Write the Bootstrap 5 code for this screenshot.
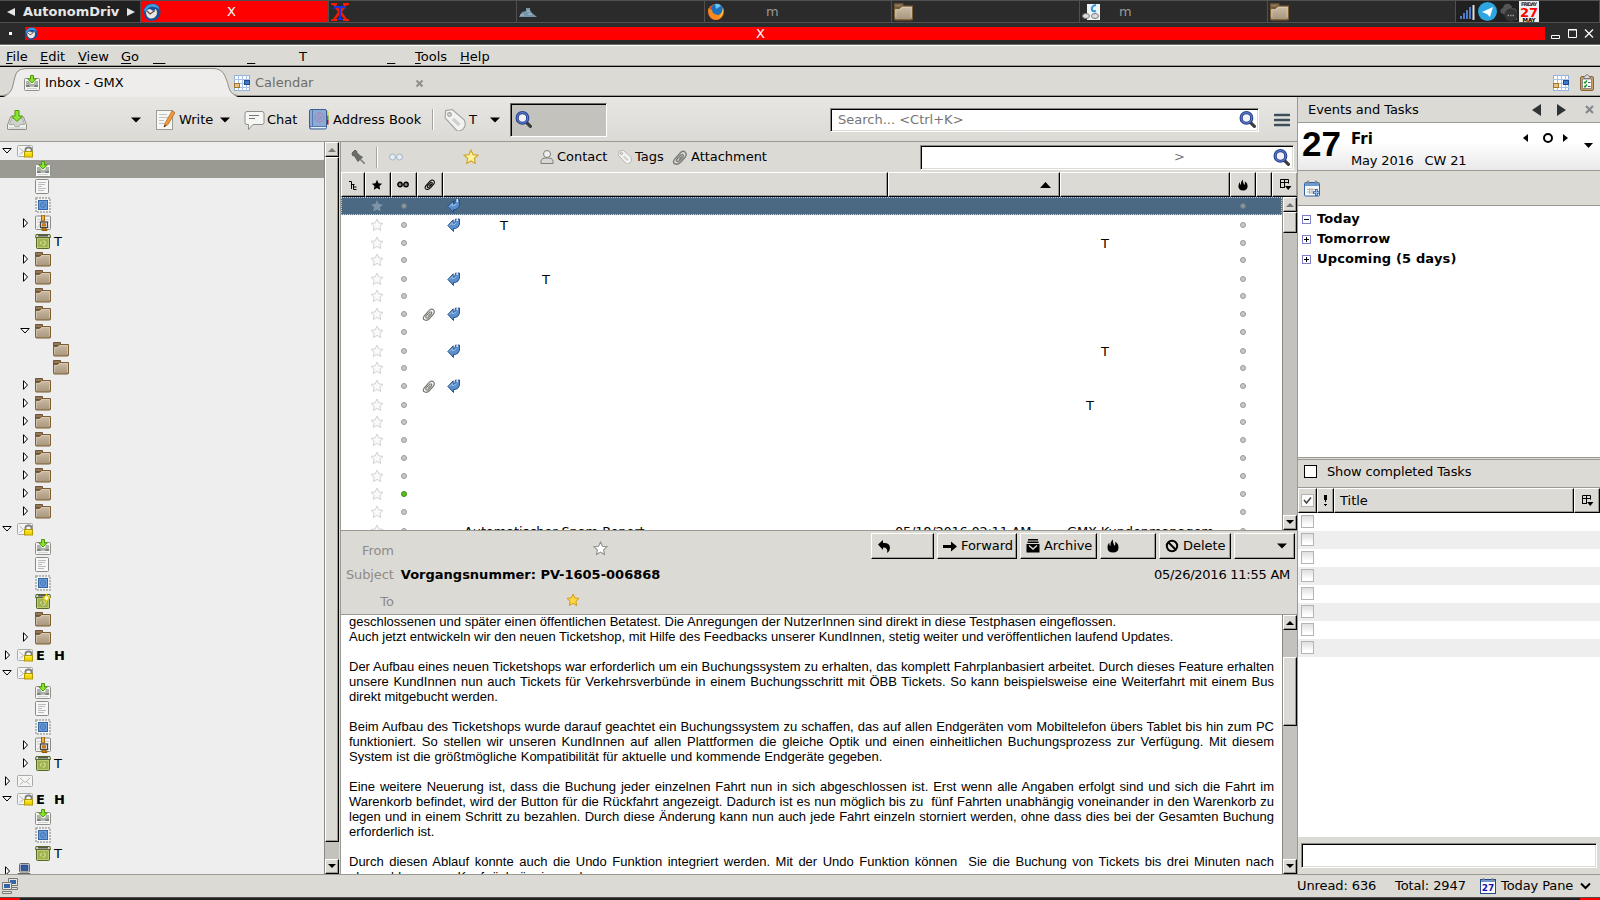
<!DOCTYPE html>
<html lang="en">

<head>
    <meta charset="UTF-8">
    <title>Inbox - GMX</title>
    <meta name="viewport" content="width=device-width, initial-scale=1">
    <link href="https://cdn.jsdelivr.net/npm/bootstrap@5.3.0/dist/css/bootstrap.min.css" rel="stylesheet">
    <style>
        body {
            width: 1600px;
            height: 900px;
            overflow: hidden;
            background-color: #dcdad5;
            font: 13px/18px "DejaVu Sans", sans-serif;
            color: #000;
            white-space: nowrap;
        }

        svg {
            display: block;
            flex: none;
        }

        .bar-grid {
            display: grid;
            align-items: center;
            justify-items: start;
        }

        /* desktop panel */
        .panel {
            height: 23px;
            background-color: #2b2b2b;
            border-top: 1px solid #505050;
            border-bottom: 1px solid #505050;
            color: #999;
            display: grid;
            grid-template-columns: 141px 188px 188px 188px 187px 188px 188px 188px 144px;
        }

        .panel > div {
            border-right: 1px solid #505050;
            display: flex;
            align-items: center;
            padding-left: 2px;
            overflow: hidden;
        }

        .panel .pager {
            background-color: #202020;
            color: #e6e6e6;
            font-weight: bold;
            padding-left: 7px;
            gap: 8px;
        }

        .panel .active-task {
            background-color: red;
            color: #fff;
        }

        .task-label {
            margin-left: 66px;
        }

        .task-label-m {
            margin-left: 41px;
        }

        .task-label-near {
            margin-left: 19px;
        }

        .titlebar {
            height: 22px;
            background-color: #2b2b2b;
            border-bottom: 1px solid #6c6c6a;
            padding-top: 4px;
        }

        .title-dot {
            width: 3px;
            height: 3px;
            margin: 5px 13px 0 9px;
            background-color: #fff;
        }

        .title-fill {
            width: 1520px;
            height: 13px;
            line-height: 13px;
            background-color: red;
            color: #fff;
        }

        .title-text {
            margin-left: 718px;
        }

        .menubar {
            height: 22px;
            border-top: 1px solid #fff;
            border-bottom: 1px solid #000;
            box-shadow: inset 0 -1px #9a9992;
            padding: 2px 0 0 6px;
            grid-template-columns: 34px 38px 43px 32px 94px 52px 88px 28px 45px auto;
        }

        .menubar u {
            text-underline-offset: 2px;
            text-decoration-thickness: 1px;
        }

        .tabbar {
            height: 30px;
        }

        .tab-shape {
            grid-area: 1 / 1;
            width: 1600px;
            height: 30px;
        }

        .tab-items {
            grid-area: 1 / 1;
            height: 30px;
            padding: 1px 0 0 24px;
            grid-template-columns: 21px 189px 21px 160px 1138px 26px auto;
        }

        .tab-items span {
            padding-top: 1px;
        }

        .tab-dim {
            color: #6d6c68;
        }

        /* mail toolbar */
        .mailbar {
            height: 45px;
            padding: 1px 0 0 7px;
            border-bottom: 1px solid #9a9992;
            background: linear-gradient(#e7e6e3, #dcdad5);
            grid-template-columns: 124px 24px 24px 41px 24px 23px 41px 25px 99px 12px 25px 21px 20px 320px 444px auto;
        }

        .sep-line {
            width: 2px;
            height: 21px;
            border-left: 1px solid #a5a39d;
            border-right: 1px solid #fff;
        }

        .filter-btn {
            width: 97px;
            height: 34px;
            padding-left: 4px;
            border: 1px solid;
            border-color: #6b6a66 #fff #fff #6b6a66;
            box-shadow: inset 1px 1px #000;
            background-color: #c4c2bd;
        }

        .sunken {
            border: 1px solid;
            border-color: #8c8a84 #fff #fff #8c8a84;
            box-shadow: inset 1px 1px #000, inset -1px -1px #dcdad5;
            background-color: #fff;
            color: #757575;
        }

        .search-box {
            width: 429px;
            height: 24px;
            padding: 0 2px 0 7px;
        }

        /* folder tree */
        .mail-side {
            width: 1297px;
        }

        .lower-area {
            height: 732px;
        }

        .tree {
            width: 324px;
            overflow: hidden;
            background-color: #eee;
        }

        .tree-row {
            height: 18px;
            display: flex;
            align-items: center;
        }

        .tree-row.chosen {
            background-color: #9a9992;
        }

        .tree-row .lbl {
            margin-left: 3px;
            padding-top: 2px;
        }

        .scroller {
            width: 15px;
            flex: none;
            background-color: #c4c2bd;
            border-left: 1px solid #8c8a84;
            display: flex;
            flex-direction: column;
        }

        .raised {
            border: 1px solid;
            border-color: #fff #000 #000 #fff;
            box-shadow: inset -1px -1px #9a9992;
            background-color: #dcdad5;
        }

        .scroller .sbtn {
            height: 15px;
            display: flex;
            align-items: center;
            justify-content: center;
        }

        .thumb-tree {
            height: 685px;
        }

        .thumb-list {
            height: 21px;
        }

        .thumb-msg {
            height: 69px;
            margin-top: 27px;
        }

        .mail-area {
            width: 957px;
            margin-left: 1px;
            border-left: 1px solid #9a9992;
        }

        .quickbar {
            height: 30px;
            padding-left: 10px;
            grid-template-columns: 25px 12px 75px 77px 17px 61px 17px 37px 19px 229px auto;
        }

        .quickbar span {
            letter-spacing: -.03px;
        }

        .quick-box {
            width: 374px;
            height: 25px;
            padding: 0 3px 0 253px;
        }

        .list-grid {
            display: grid;
            grid-template-columns: 24px 26px 26px 26px 445px 172px 170px 26px 16px 25px;
        }

        .head-cell {
            height: 25px;
            border-top: 1px solid #fff;
            border-left: 1px solid #fff;
            border-right: 1px solid #000;
            border-bottom: 1px solid #000;
            box-shadow: inset -1px -1px #9a9992;
            display: flex;
            align-items: center;
            justify-content: center;
        }

        .head-cell.narrow {
            padding-right: 2px;
        }

        .head-cell.sorted {
            justify-content: flex-end;
            padding-right: 8px;
        }

        .list-area {
            height: 333px;
            overflow: hidden;
            background-color: #fff;
        }

        .mail-list {
            width: 941px;
            overflow: hidden;
        }

        .mail-row {
            height: 18px;
            align-items: center;
            justify-items: center;
        }

        .mail-row > .wide {
            width: 100%;
            display: flex;
            align-items: center;
        }

        .mail-row > .wide span {
            padding-top: 2px;
            letter-spacing: -.12px;
        }

        .mail-row > .wide .date {
            padding-left: 7px;
            letter-spacing: -.24px;
        }

        .mail-row.chosen {
            background-color: #4b6983;
            outline: 1px dotted #f0d070;
            outline-offset: -1px;
        }

        .flag-slot {
            padding-right: 2px;
        }

        .clip-slot {
            padding-right: 3px;
        }

        .dot {
            width: 6px;
            height: 6px;
            border-radius: 50%;
            border: 1px solid #9a9a9a;
            background-color: #c8c8c8;
        }

        .dot.unread {
            background-color: #5bc01d;
            border-color: #3c8a10;
        }

        .mail-row.chosen .dot {
            background-color: #8c959c;
            border-color: #6b7984;
        }

        .reply-slot {
            width: 21px;
            padding-left: 4px;
        }

        /* message header */
        .msg-head {
            height: 85px;
            border-top: 1px solid #9a9992;
            border-bottom: 1px solid #9a9992;
            padding: 2px 2px 0 0;
        }

        .head-labels {
            width: 53px;
            text-align: right;
            color: #8c8b87;
            padding-top: 9px;
            letter-spacing: -.1px;
        }

        .head-labels div {
            height: 24px;
        }

        .head-labels div:last-child {
            padding-top: 3px;
        }

        .head-values {
            width: 472px;
            margin-left: 7px;
            padding-top: 8px;
        }

        .head-values div {
            height: 25px;
            display: flex;
        }

        .star-from {
            margin: 0 0 0 192px;
        }

        .star-to {
            margin: 2px 0 0 165px;
        }

        .msg-buttons {
            height: 26px;
            display: grid;
            grid-template-columns: 63px 80px 77px 56px 72px 61px;
            column-gap: 3px;
        }

        .msg-buttons > div {
            display: flex;
            align-items: center;
            padding-left: 5px;
            gap: 4px;
            letter-spacing: -.05px;
        }

        .msg-buttons .more-btn {
            justify-content: flex-end;
            padding-right: 7px;
        }

        .msg-date {
            padding: 7px 5px 0 0;
            letter-spacing: -.25px;
        }

        /* message text */
        .msg-body {
            height: 259px;
            background-color: #fff;
        }

        .msg-text {
            width: 941px;
            overflow: hidden;
            padding-left: 8px;
            font: 13px/15px "Liberation Sans", Arial, sans-serif;
        }

        .msg-text p {
            width: 925px;
            margin: 0 0 15px;
            position: relative;
            top: -1px;
        }

        .msg-text span {
            display: block;
            text-align: left;
        }

        .msg-text .full {
            text-align: justify;
            text-align-last: justify;
        }

        .msg-text .loose {
            word-spacing: .3px;
        }

        /* today pane */
        .today-pane {
            width: 303px;
            border-left: 1px solid #9a9992;
        }

        .today-top {
            height: 26px;
            padding-left: 10px;
            border-bottom: 1px solid #9a9992;
            grid-template-columns: 224px 25px 28px auto;
        }

        .today-top span {
            letter-spacing: -.05px;
        }

        .day-box {
            height: 48px;
            border-bottom: 1px solid #9a9992;
            background: linear-gradient(#fff 40%, #e9e9e9);
            display: flex;
        }

        .day-num {
            width: 48px;
            padding: 0 0 0 4px;
            font: bold 35px/41px "Liberation Sans", Arial, sans-serif;
        }

        .day-text {
            width: 172px;
            margin-left: 5px;
            padding-top: 6px;
        }

        .day-name {
            font-size: 15px;
            font-weight: bold;
            line-height: 20px;
        }

        .day-month {
            line-height: 23px;
            letter-spacing: -.18px;
        }

        .cw {
            margin-left: 7px;
        }

        .day-nav {
            padding-top: 5px;
            grid-template-columns: 20px 20px 21px auto;
            height: 20px;
        }

        .day-more {
            margin-top: 15px;
        }

        .event-tools {
            height: 35px;
            border-bottom: 1px solid #9a9992;
            padding-left: 6px;
        }

        .agenda {
            height: 251px;
            background-color: #fff;
            font-weight: bold;
            padding-top: 3px;
        }

        .agenda-row {
            height: 20px;
            padding-left: 4px;
            display: flex;
            align-items: center;
            gap: 6px;
            letter-spacing: .15px;
        }

        .show-done {
            height: 31px;
            border-top: 1px solid #9a9992;
            border-bottom: 1px solid #9a9992;
            box-shadow: inset 0 1px #dcdad5, inset 0 2px #9a9992;
            padding: 0 0 2px 6px;
            letter-spacing: -.14px;
        }

        .done-box {
            width: 13px;
            height: 13px;
            margin-right: 10px;
            border: 1px solid #000;
            background-color: #fff;
        }

        .task-head {
            display: grid;
            grid-template-columns: 19px 17px 240px 26px;
        }

        .task-head .title-cell {
            justify-content: flex-start;
            padding-left: 5px;
        }

        .task-list {
            height: 324px;
            background-color: #fff;
        }

        .task-row {
            height: 18px;
            padding: 2px 0 0 3px;
        }

        .task-row:nth-child(even) {
            background-color: #eee;
        }

        .task-check {
            width: 13px;
            height: 13px;
            border: 1px solid #b4b4b4;
            background: linear-gradient(#dedede, #fff 80%);
        }

        .task-entry {
            padding: 6px 3px 6px 3px;
        }

        .task-entry div {
            height: 25px;
            width: 296px;
        }

        /* status bar */
        .statusbar {
            height: 23px;
            border-top: 1px solid #9a9992;
            padding-left: 2px;
            grid-template-columns: 1295px 98px 85px 21px 79px auto;
            letter-spacing: -.1px;
        }

        .bottom-edge {
            height: 3px;
            background-color: #202020;
            border-top: 1px solid #505050;
        }

        .bottom-edge div {
            width: 20px;
            height: 2px;
            background-color: red;
        }
    </style>
</head>

<body>
    <svg width="0" height="0" class="position-absolute">
        <defs>
            <linearGradient id="g-folder" x2="0" y2="1">
                <stop stop-color="#cbbca6" />
                <stop offset="1" stop-color="#a7957b" />
            </linearGradient>
            <symbol id="i-folder" viewBox="0 0 16 16">
                <path d="M.5 13V1.5h7v3h-7z" fill="#8f7a5f" stroke="#6f5535" />
                <path d="M.5 13.5V5.5h4l2-2h9v10.500q0 1-1 1h-13q-1 0-1-1z" fill="url(#g-folder)" stroke="#7d5c30" />
                <path d="M1.500 13V6.500h3.500l2-2h7.500V13" fill="none" stroke="#dccfb9" opacity=".7" />
            </symbol>
            <symbol id="i-inbox" viewBox="0 0 16 16">
                <path d="M.5 4.500q0-1 1-1h13q1 0 1 1v10q0 1-1 1h-13q-1 0-1-1z" fill="#f6f6f4" stroke="#8d8f8a" />
                <path d="M2 6h3l2 3h3l1-3h3v5H2z" fill="#aeb3a9" />
                <path d="M2 10h3l1 1.500h4l1-1.500h3v2H2z" fill="#7f847b" />
                <path d="M3 13.500h10" stroke="#d2d4cf" />
                <path d="M6.500.5h3v3.500h2.800L8 8 3.700 4h2.800z" fill="#8ae234" stroke="#4e9a06" />
            </symbol>
            <symbol id="i-get" viewBox="0 0 20 20">
                <path d="M3.500 7h13l3 8v4q0 .5-.5.5H1q-.5 0-.5-.5v-4z" fill="#f0f0ee" stroke="#8d8f8a" />
                <path d="M4.500 8.500h11l2 6H13l-1 2H8l-1-2H2.500z" fill="#d0d3cc" stroke="#a9aca5" />
                <path d="M2 18h16" stroke="#c6c8c3" />
                <path d="M8 .5h4V6h3.500L10 11.500 4.500 6H8z" fill="#8ae234" stroke="#4e9a06" />
            </symbol>
            <symbol id="i-draft" viewBox="0 0 16 16">
                <rect x=".5" y=".5" width="13" height="14" rx="1" fill="#f7f7f7" stroke="#888a85" />
                <path d="M3 3.500h8M3 5.500h7M3 7.500h4M3 9.500h8M3 11.500h6" stroke="#bcbdba" />
            </symbol>
            <symbol id="i-sent" viewBox="0 0 16 16">
                <rect x="1" y="1" width="14" height="14" fill="#f4f4f2" stroke="#a3a5a0" stroke-width="1.500" stroke-dasharray="2 1" />
                <rect x="3.500" y="3.500" width="9" height="9" fill="#6a9bd8" stroke="#3465a4" />
                <circle cx="8" cy="8" r="2.500" fill="none" stroke="#3f74b8" />
                <circle cx="8" cy="8" r=".8" fill="#3f74b8" />
            </symbol>
            <symbol id="i-archive" viewBox="0 0 16 16">
                <rect x=".5" y="1" width="15" height="13.500" rx="1" fill="#f3f3f1" stroke="#888a85" />
                <path d="M2 4.500h12M2 7h12" stroke="#ccc" />
                <path d="M2 13l4-5M14 13l-2-3" stroke="#c3c3c0" />
                <path d="M6.500 0h3v6h-3z" fill="#e9b050" stroke="#a4660c" />
                <path d="M7 12v3.500h5V14h-1.500v-2" fill="#c17d11" stroke="#8f5902" />
                <rect x="5.500" y="7" width="7" height="5.500" fill="#e6e6e3" stroke="#444" stroke-width="1.200" />
                <rect x="7.500" y="8.700" width="3" height="2.300" fill="#f57900" stroke="#8f5902" stroke-width=".6" />
            </symbol>
            <symbol id="i-trash" viewBox="0 0 16 16">
                <path d="M1.500 4.500h13v10q0 1-1 1h-11q-1 0-1-1z" fill="#a0b14e" stroke="#55692a" />
                <path d="M2.500 5.500h11v9h-11z" fill="none" stroke="#bccb78" />
                <path d="M1 1.500h14l.5 3H.5z" fill="#d5d8cf" stroke="#55692a" />
                <path d="M3 2h10v1.500H3z" fill="#555753" />
                <circle cx="8" cy="10" r="2.300" fill="none" stroke="#dfe8b5" stroke-dasharray="3.500 1.500" />
            </symbol>
            <symbol id="i-spark" viewBox="0 0 16 16">
                <use href="#i-trash" />
                <path d="M11.500 0l1.200 3.200L16 5l-3.300 1.500L11.500 10l-1.200-3.500L7 5l3.300-1.800z" fill="#edd400" />
                <circle cx="11.500" cy="5" r="2.300" fill="#fffbe0" stroke="#e8c500" stroke-width=".8" />
            </symbol>
            <symbol id="i-mail" viewBox="0 0 16 16">
                <rect x=".5" y="2.500" width="15" height="11" rx="1" fill="#f5f5f4" stroke="#a9aaa6" />
                <path d="M3 5l5 4.500L13 5M3 11.500L6.500 8.500M13 11.500L9.500 8.500" fill="none" stroke="#b6b7b3" />
            </symbol>
            <symbol id="i-account" viewBox="0 0 16 16">
                <rect x=".5" y="2.500" width="15" height="11" rx="1" fill="#f5f5f4" stroke="#a9aaa6" />
                <path d="M2.500 5l4 3.500-4 3" fill="none" stroke="#b6b7b3" />
                <path d="M8.500 9V6.500q0-2 3-2t3 2V9" fill="none" stroke="#7d7f7a" stroke-width="1.800" />
                <rect x="7.500" y="8.500" width="8" height="5.500" fill="#f3d500" stroke="#b39700" />
                <path d="M8.500 9.800h6" stroke="#fff170" />
            </symbol>
            <symbol id="i-pc" viewBox="0 0 16 16">
                <rect x="2.500" y=".5" width="10" height="8.500" rx="1" fill="#e8e8e6" stroke="#666864" />
                <rect x="4" y="2" width="7" height="5.500" fill="#3458a0" stroke="#1f3a78" stroke-width=".7" />
                <path d="M1 10.500h12v3H1z" fill="#d3d3d0" stroke="#666864" />
            </symbol>
            <symbol id="i-open" viewBox="0 0 10 10">
                <path d="M.8 2.500h8.400L5 7z" fill="#fff" stroke="#000" />
            </symbol>
            <symbol id="i-shut" viewBox="0 0 10 10">
                <path d="M3.500.7v8.600L7.500 5z" fill="#fff" stroke="#000" />
            </symbol>
            <symbol id="i-cal" viewBox="0 0 16 16">
                <rect x=".5" y=".5" width="15" height="15" fill="#fff" stroke="#8fb0dc" />
                <path d="M0 4.500h16M0 8.500h16M0 12.500h16M4.500 0v16M8.500 0v16M12.500 0v16" stroke="#a9c3e6" />
                <rect x="10.500" y="5.500" width="5" height="4" fill="#3d78c9" stroke="#204a87" />
                <rect x=".5" y="8.500" width="5" height="4" fill="#e9c27e" stroke="#a4762c" />
            </symbol>
            <symbol id="i-clipboard" viewBox="0 0 16 17">
                <rect x="1.500" y="2.500" width="13" height="14" rx="1.500" fill="#c8a06c" stroke="#8a6534" />
                <path d="M3.500 5h9v9.500h-9z" fill="#fff" stroke="#777" stroke-width=".8" />
                <path d="M5 4.500V3l3-2.500L11 3v1.500z" fill="#ddd" stroke="#777" />
                <path d="M5 8l1 1 2-2.500M5 12l1 1 2-2.500" fill="none" stroke="#0a9a20" stroke-width="1.400" />
                <path d="M9 8.500h2.500M9 12.500h2.500" stroke="#555" />
            </symbol>
            <symbol id="i-lens" viewBox="0 0 16 16">
                <path d="M10.500 10.500l4 4" stroke="#3b3b3b" stroke-width="3" stroke-linecap="round" />
                <circle cx="7" cy="6.500" r="5" fill="#f2f2f5" stroke="#26408f" stroke-width="3" />
                <circle cx="7" cy="6.500" r="5" fill="none" stroke="#5f7fd0" stroke-width="1" />
            </symbol>
            <symbol id="i-tri" viewBox="0 0 10 6">
                <path d="M0 .5h10L5 5.500z" />
            </symbol>
            <symbol id="i-star" viewBox="0 0 14 14">
                <path d="M7 1l1.800 3.900 4.200.5-3.100 2.900.8 4.200L7 10.400l-3.700 2.100.8-4.200L1 5.400l4.200-.5z" />
            </symbol>
            <symbol id="i-reply" viewBox="0 0 13 14">
                <path d="M.8 7.500L6.200 1.800V5q2.300 0 2.300-4h4v5q-.5 3.500-4 4.500H6.500v3z" fill="#5b8fcb" stroke="#204a87" stroke-width=".9" />
                <path d="M10.200 0v3" stroke="#fff" stroke-width="1.200" />
                <path d="M2.300 7.500l3-3v2.200q3 0 4.200-2" fill="none" stroke="#a7c8ec" stroke-width=".8" />
            </symbol>
            <symbol id="i-clip" viewBox="0 0 14 14">
                <path d="M2 12.500Q.5 11 2.500 8.500L8 2.300q2.500-2 4.300-.3t.2 4.300L8.500 11q-3.500 3.500-6.500 1.500zM4.500 10.500Q3.500 9.500 5 8l3.500-3.500q1.200-.8 1.800 0t-.3 2L7 10q-1.500 1.300-2.500.5z" fill="none" stroke-width="1.300" />
                <path d="M6.500 9l2.500-3" fill="none" />
            </symbol>
            <symbol id="i-tag" viewBox="0 0 20 20">
                <path d="M1.500 1.500l6-1 11 9.500q2 5-1 8t-6 1.500L1 8z" fill="#f3f3f1" stroke="#a0a29d" />
                <path d="M8 9l6 5.500" stroke="#cfcfcc" stroke-width="3" />
                <circle cx="5" cy="5" r="1.700" fill="#dcdad5" stroke="#a0a29d" />
            </symbol>
            <symbol id="i-flame" viewBox="0 0 12 14">
                <path d="M6 .5q-.5 3 .8 4.800.3 2 1.200 1 .8-1.500 0-3.500 3.500 1.500 3.500 5.700 0 5-5.500 5t-5.500-5Q.5 5.500 2.300 3.500q-.3 3 1.200 3.500Q3 3 6 .5z" />
            </symbol>
            <symbol id="i-pick" viewBox="0 0 13 13">
                <path d="M1.500 10V1.500h8v4M1.500 4.500h8M5.500 1.500v8M1 9.500h5" fill="none" stroke="#000" />
                <path d="M6 8h6.500L9.200 12z" />
            </symbol>
            <symbol id="i-bird" viewBox="0 0 18 18">
                <path d="M1 10Q0 3 6 1q7-2 10 3 3 6 0 10-3 4-8 4-6-1-7-8z" fill="#1c4f96" />
                <path d="M1 7Q4 0 11 1q5 1 5.500 6-2-3-6-3-5-1-8 5z" fill="#3b9be0" />
                <path d="M3 9q2-4 5-2.500L10 8l3-2q2 4 0 7-2 3-6 2.500Q3 14 3 9z" fill="#ece7df" />
                <path d="M4 8l3 3 5-3.500" stroke="#5c4c42" fill="none" stroke-width="1.200" />
            </symbol>
        </defs>
    </svg>

    <div class="panel">
        <div class="pager">
            <svg width="8" height="8"><path d="M8 0v8L0 4z" fill="#e6e6e6" /></svg>
            <span>AutonomDriv</span>
            <svg width="8" height="8"><path d="M0 0v8l8-4z" fill="#e6e6e6" /></svg>
        </div>
        <div class="active-task">
            <svg width="18" height="18"><use href="#i-bird" /></svg>
            <span class="task-label">X</span>
        </div>
        <div>
            <svg width="18" height="18" viewBox="0 0 18 18">
                <path d="M0 0h6v2H5l4 5 4-5h-1V0h6v2h-2l-5 7 5 7h2v2h-6v-2h1l-4-5-4 5h1v2H0v-2h2l5-7-5-7H0z" fill="#f21d00" />
                <path d="M3 3h12v3h-1l-1-1h-3v10l2 1v1H6v-1l2-1V5H5L4 6H3z" fill="#1a35e0" />
            </svg>
        </div>
        <div>
            <svg width="18" height="18" viewBox="0 0 18 18">
                <path d="M0 14l3-5 4-1V5h4v2l2 3 5 4z" fill="#7896aa" />
                <path d="M1 12h4M8 8h3M9 11h4" stroke="#a9c2d2" />
            </svg>
        </div>
        <div>
            <svg width="18" height="18" viewBox="0 0 18 18">
                <circle cx="9" cy="9" r="8" fill="#e8601c" />
                <circle cx="10" cy="7" r="6.200" fill="#1c6fc0" />
                <path d="M8 1q4-1 6 2l-5 3z" fill="#67c3ef" />
                <path d="M1 5q1 2 4 1.500Q5 11 11 12q3-1 5-4 0 8-7 9-8-1-8-12z" fill="#f58a1f" />
                <path d="M16 4q2 7-4 11l3-6z" fill="#ffc83a" />
            </svg>
            <span class="task-label-m">m</span>
        </div>
        <div><svg width="19" height="19"><use href="#i-folder" /></svg></div>
        <div>
            <svg width="18" height="18" viewBox="0 0 18 18">
                <path d="M5 1h13v16H5z" fill="#eef3f6" />
                <path d="M14 2q-5 1-4 5 1 2 4 1" fill="none" stroke="#2f9bd8" stroke-width="2" />
                <ellipse cx="4" cy="13" rx="3.500" ry="2.500" fill="#ddd" stroke="#777" />
                <ellipse cx="13" cy="13" rx="3.500" ry="2.500" fill="#ddd" stroke="#777" />
            </svg>
            <span class="task-label-near">m</span>
        </div>
        <div><svg width="19" height="19"><use href="#i-folder" /></svg></div>
        <div class="bg-black bg-opacity-25">
            <svg width="82" height="21" viewBox="0 0 82 21">
                <path d="M3 18v-3M6 18v-6M9 18V9M12 18V6" stroke="#4d79c7" stroke-width="2" />
                <path d="M15.500 19V4" stroke="#ddd" stroke-width="2" />
                <circle cx="29.500" cy="10.500" r="9.500" fill="#2ca5e0" />
                <path d="M24 11l11-5-3 10-3-3z" fill="#fff" />
                <path d="M43 12q-2-4 2-5 1-5 6-4 3 1 3 4 5 0 5 4v8h-9l-3-5z" fill="#555" />
                <circle cx="53" cy="14" r="6.500" fill="#333" />
                <path d="M49.500 14.500h7" stroke="#999" stroke-width="1.500" stroke-dasharray="1.500 1" />
                <path d="M61 0h20v21H61z" fill="#eee" />
                <text x="71" y="5" font-size="5" font-weight="bold" text-anchor="middle" fill="#333" textLength="16">FRIDAY</text>
                <text x="71" y="15.500" font-size="13" font-weight="bold" text-anchor="middle" fill="#f00">27</text>
                <text x="71" y="20.500" font-size="5.500" font-weight="bold" text-anchor="middle" fill="#000">MAY</text>
            </svg>
        </div>
    </div>

    <div class="titlebar d-flex">
        <div class="title-dot"></div>
        <div class="title-fill d-flex">
            <svg width="13" height="13"><use href="#i-bird" /></svg>
            <span class="title-text">X</span>
        </div>
        <svg width="55" height="14" viewBox="0 0 55 14">
            <path d="M6.500 8.500h8v3h-8zM23.500 2.500h8v8h-8z" fill="none" stroke="#fff" />
            <path d="M23 3h9M40 2.500l8 8M48 2.500l-8 8" fill="none" stroke="#fff" stroke-width="1.200" />
        </svg>
    </div>

    <div class="menubar bar-grid">
        <span><u>F</u>ile</span>
        <span><u>E</u>dit</span>
        <span><u>V</u>iew</span>
        <span><u>G</u>o</span>
        <u>&nbsp; &nbsp;</u>
        <u>&nbsp;&nbsp;</u>
        <span>T</span>
        <u>&nbsp;&nbsp;</u>
        <span><u>T</u>ools</span>
        <span><u>H</u>elp</span>
    </div>

    <div class="tabbar d-grid">
        <svg class="tab-shape" viewBox="0 0 1600 30">
            <path d="M0 28.500H1600" stroke="#9a9992" />
            <path d="M0 29.500H1600" stroke="#000" />
            <path d="M3 30Q11 28 13 20T17 5Q20 1.500 26 1.500H214Q222 2 225 9T229 21Q231 28 238 30z" fill="#eeedeb" />
            <path d="M3 28.500Q11 28 13 18T17 5Q20 1.500 26 1.500H214Q222 2 225 9T229 21Q231 28 238 28.500" fill="none" stroke="#8f8e88" />
        </svg>
        <div class="tab-items bar-grid">
            <svg width="16" height="16"><use href="#i-inbox" /></svg>
            <span>Inbox - GMX</span>
            <svg width="16" height="16"><use href="#i-cal" /></svg>
            <span class="tab-dim">Calendar</span>
            <svg width="10" height="10"><path d="M1.500 2.500l6 6M7.500 2.500l-6 6" stroke="#8f8e89" stroke-width="2" /></svg>
            <svg width="16" height="16"><use href="#i-cal" /></svg>
            <svg width="16" height="17"><use href="#i-clipboard" /></svg>
        </div>
    </div>

    <div class="d-flex">
        <div class="mail-side">
            <div class="mailbar bar-grid">
                <svg width="20" height="20"><use href="#i-get" /></svg>
                <svg width="10" height="6"><use href="#i-tri" /></svg>
                <svg width="20" height="20" viewBox="0 0 20 20">
                    <rect x="1.500" y=".5" width="16" height="19" fill="#f7f7f6" stroke="#9b9d98" />
                    <path d="M4 4.500h8M4 7.500h9M4 10.500h5M4 13.500h6" stroke="#c3c4c1" />
                    <path d="M9 17l1.500-4.500L17 1l3 1.500L13 14.500z" fill="#f09a3a" stroke="#b0651a" stroke-width=".8" />
                    <path d="M9 17l.7-2 1.300.8z" />
                </svg>
                <span>Write</span>
                <svg width="10" height="6"><use href="#i-tri" /></svg>
                <svg width="21" height="20" viewBox="0 0 21 20">
                    <path d="M3 1.500h15q2 0 2 2v9q0 2-2 2H9l-4.500 5v-5H3q-2 0-2-2v-9q0-2 2-2z" fill="#f6f6f5" stroke="#8d8f8a" />
                    <path d="M5 5.500h10M5 8.500h6" stroke="#777" />
                </svg>
                <span>Chat</span>
                <svg width="21" height="21" viewBox="0 0 21 21">
                    <path d="M18 2h2.500v4.500H18z" fill="#edd400" />
                    <path d="M18 6.500h2.500V11H18z" fill="#4e9a06" />
                    <path d="M18 11h2.500v4.500H18z" fill="#c00" />
                    <rect x="1.500" y=".5" width="17" height="19.500" rx="1.500" fill="#8aabd6" stroke="#3c5e94" />
                    <path d="M4.500 1v16M2 17.500h16" stroke="#5478ae" />
                    <path d="M3 18.700h15" stroke="#fff" />
                    <circle cx="11.500" cy="8.500" r="4.500" fill="none" stroke="#b77aa8" />
                    <circle cx="11.500" cy="8.500" r="1.700" fill="none" stroke="#b77aa8" />
                </svg>
                <span>Address Book</span>
                <div class="sep-line"></div>
                <svg width="22" height="22"><use href="#i-tag" /></svg>
                <span>T</span>
                <svg width="10" height="6"><use href="#i-tri" /></svg>
                <div class="filter-btn d-flex align-items-center">
                    <svg width="17" height="17"><use href="#i-lens" /></svg>
                </div>
                <div class="sunken search-box d-flex align-items-center justify-content-between">
                    <span>Search... &lt;Ctrl+K&gt;</span>
                    <svg width="17" height="17"><use href="#i-lens" /></svg>
                </div>
                <svg width="16" height="14" viewBox="0 0 16 14">
                    <path d="M1 2h14M1 7h14M1 12h14" stroke="#3f4f5a" stroke-width="2.600" stroke-linecap="round" />
                </svg>
            </div>

            <div class="lower-area d-flex">
                <div class="tree" id="folder-tree"></div>
                <div class="scroller">
                    <div class="raised sbtn"><svg width="8" height="5"><path d="M0 5l4-4 4 4z" fill="#77756f" /></svg></div>
                    <div class="raised thumb-tree"></div>
                    <div class="raised sbtn mt-auto"><svg width="8" height="5"><path d="M0 0l4 4 4-4z" /></svg></div>
                </div>

                <div class="mail-area">
                    <div class="quickbar bar-grid">
                        <svg width="14" height="14" viewBox="0 0 14 14">
                            <path d="M1 3l3-3 1.500 1 .5 2 4 3.500 1.500.5-4.500 4.500-1-1.500-2.500-4-2-.5z" fill="#6b6d69" stroke="#4f504d" stroke-width=".8" />
                            <path d="M9 9l5 5" stroke="#777" stroke-width="1.500" />
                        </svg>
                        <div class="sep-line"></div>
                        <svg width="16" height="8" viewBox="0 0 16 8">
                            <circle cx="4.500" cy="4" r="3" fill="#e3edf8" stroke="#a9b3bf" />
                            <circle cx="11.500" cy="4" r="3" fill="#e3edf8" stroke="#a9b3bf" />
                        </svg>
                        <svg width="16" height="16" fill="#fff3a0" stroke="#cfa62b"><use href="#i-star" /></svg>
                        <svg width="14" height="14" viewBox="0 0 14 14">
                            <path d="M1 13.500q-1-5 4-5.500h4q5 .5 4 5.500z" fill="#d6d7d4" stroke="#7d7f7a" />
                            <circle cx="7" cy="4" r="3.500" fill="#efefed" stroke="#7d7f7a" />
                        </svg>
                        <span>Contact</span>
                        <svg width="14" height="14"><use href="#i-tag" /></svg>
                        <span>Tags</span>
                        <svg width="15" height="15" stroke="#7a7c77"><use href="#i-clip" /></svg>
                        <span>Attachment</span>
                        <div class="sunken quick-box d-flex align-items-center justify-content-between">
                            <span>&gt;</span>
                            <svg width="17" height="17"><use href="#i-lens" /></svg>
                        </div>
                    </div>

                    <div class="list-grid">
                        <div class="head-cell"><svg width="8" height="10"><path d="M0 1.500h2.500v7.500M2.500 4.500h3M4.500 4.500v5h3M4.500 7h3" fill="none" stroke="#000" /></svg></div>
                        <div class="head-cell narrow"><svg width="12" height="12"><use href="#i-star" /></svg></div>
                        <div class="head-cell narrow">
                            <svg width="12" height="7" viewBox="0 0 12 7">
                                <circle cx="3" cy="3.500" r="2.200" fill="#888" stroke="#000" stroke-width="1.400" />
                                <circle cx="9" cy="3.500" r="2.200" fill="#888" stroke="#000" stroke-width="1.400" />
                            </svg>
                        </div>
                        <div class="head-cell narrow"><svg width="11" height="11" stroke="#000"><use href="#i-clip" /></svg></div>
                        <div class="head-cell"></div>
                        <div class="head-cell sorted"><svg width="11" height="6"><path d="M0 6l5.500-6L11 6z" /></svg></div>
                        <div class="head-cell"></div>
                        <div class="head-cell"><svg width="10" height="12"><use href="#i-flame" /></svg></div>
                        <div class="head-cell"></div>
                        <div class="head-cell border-end-0"><svg width="13" height="13"><use href="#i-pick" /></svg></div>
                    </div>

                    <div class="list-area d-flex">
                        <div class="mail-list" id="mail-list"></div>
                        <div class="scroller">
                            <div class="raised sbtn"><svg width="8" height="5"><path d="M0 5l4-4 4 4z" fill="#77756f" /></svg></div>
                            <div class="raised thumb-list"></div>
                            <div class="raised sbtn mt-auto"><svg width="8" height="5"><path d="M0 0l4 4 4-4z" /></svg></div>
                        </div>
                    </div>

                    <div class="msg-head d-flex">
                        <div class="head-labels">
                            <div>From</div>
                            <div>Subject</div>
                            <div>To</div>
                        </div>
                        <div class="head-values">
                            <div><svg class="star-from" width="15" height="15" fill="#fff" stroke="#8f8f8c"><use href="#i-star" /></svg></div>
                            <div class="fw-bold">Vorgangsnummer: PV-1605-006868</div>
                            <div><svg class="star-to" width="14" height="14" fill="#ffd640" stroke="#d39a1a"><use href="#i-star" /></svg></div>
                        </div>
                        <div class="flex-shrink-0">
                            <div class="msg-buttons">
                                <div class="raised"><svg width="15" height="13" viewBox="0 0 15 13"><path d="M1 4.500L6 0v3q7-.5 7 5 0 3-3 5 1.500-5.500-4-5.500V10z" /></svg></div>
                                <div class="raised"><svg width="14" height="11" viewBox="0 0 14 11"><path d="M0 4h8V.5l6 5-6 5V7H0z" /></svg><span>Forward</span></div>
                                <div class="raised">
                                    <svg width="14" height="14" viewBox="0 0 14 14">
                                        <path d="M2 .8h10M1.500 3.200h11" stroke="#000" stroke-width="1.400" />
                                        <path d="M.5 5h13v8.500H.5z" />
                                        <path d="M3 6.500l4 3.500 4-3.500" fill="none" stroke="#dcdad5" stroke-width="1.500" />
                                    </svg>
                                    <span>Archive</span>
                                </div>
                                <div class="raised"><svg width="14" height="14"><use href="#i-flame" /></svg></div>
                                <div class="raised">
                                    <svg width="14" height="14" viewBox="0 0 14 14"><circle cx="7" cy="7" r="5.200" fill="none" stroke="#000" stroke-width="2" /><path d="M3.500 3.500l7 7" stroke="#000" stroke-width="2" /></svg>
                                    <span>Delete</span>
                                </div>
                                <div class="raised more-btn"><svg width="10" height="6"><use href="#i-tri" /></svg></div>
                            </div>
                            <div class="msg-date text-end">05/26/2016 11:55 AM</div>
                        </div>
                    </div>

                    <div class="msg-body d-flex">
                        <div class="msg-text">
                            <p>
                                <span>geschlossenen und später einen öffentlichen Betatest. Die Anregungen der NutzerInnen sind direkt in diese Testphasen eingeflossen.</span>
                                <span>Auch jetzt entwickeln wir den neuen Ticketshop, mit Hilfe des Feedbacks unserer KundInnen, stetig weiter und veröffentlichen laufend Updates.</span>
                            </p>
                            <p>
                                <span class="full">Der Aufbau eines neuen Ticketshops war erforderlich um ein Buchungssystem zu erhalten, das komplett Fahrplanbasiert arbeitet. Durch dieses Feature erhalten</span>
                                <span class="full">unsere KundInnen nun auch Tickets für Verkehrsverbünde in einem Buchungsschritt mit ÖBB Tickets. So kann beispielsweise eine Weiterfahrt mit einem Bus</span>
                                <span>direkt mitgebucht werden.</span>
                            </p>
                            <p>
                                <span class="full">Beim Aufbau des Ticketshops wurde darauf geachtet ein Buchungssystem zu schaffen, das auf allen Endgeräten vom Mobiltelefon übers Tablet bis hin zum PC</span>
                                <span class="full">funktioniert. So stellen wir unseren KundInnen auf allen Plattformen die gleiche Optik und einen einheitlichen Buchungsprozess zur Verfügung. Mit diesem</span>
                                <span class="loose">System ist die größtmögliche Kompatibilität für aktuelle und kommende Endgeräte gegeben.</span>
                            </p>
                            <p>
                                <span class="full">Eine weitere Neuerung ist, dass die Buchung jeder einzelnen Fahrt nun in sich abgeschlossen ist. Erst wenn alle Angaben erfolgt sind und sich die Fahrt im</span>
                                <span class="full">Warenkorb befindet, wird der Button für die Rückfahrt angezeigt. Dadurch ist es nun möglich bis zu&nbsp; fünf Fahrten unabhängig voneinander in den Warenkorb zu</span>
                                <span class="full">legen und in einem Schritt zu bezahlen. Durch diese Änderung kann nun auch jede Fahrt einzeln storniert werden, ohne dass dies bei der Gesamten Buchung</span>
                                <span>erforderlich ist.</span>
                            </p>
                            <p>
                                <span class="full">Durch diesen Ablauf konnte auch die Undo Funktion integriert werden. Mit der Undo Funktion können&nbsp; Sie die Buchung von Tickets bis drei Minuten nach</span>
                                <span>abgeschlossenem Kauf rückgängig machen.</span>
                            </p>
                        </div>
                        <div class="scroller">
                            <div class="raised sbtn"><svg width="8" height="5"><path d="M0 5l4-4 4 4z" /></svg></div>
                            <div class="raised thumb-msg"></div>
                            <div class="raised sbtn mt-auto"><svg width="8" height="5"><path d="M0 0l4 4 4-4z" /></svg></div>
                        </div>
                    </div>
                </div>
            </div>
        </div>

        <div class="today-pane">
            <div class="today-top bar-grid">
                <span>Events and Tasks</span>
                <svg width="9" height="12"><path d="M9 0v12L0 6z" fill="#2e3436" /></svg>
                <svg width="9" height="12"><path d="M0 0v12l9-6z" fill="#2e3436" /></svg>
                <svg width="9" height="9"><path d="M1 1l7 7M8 1L1 8" stroke="#84888c" stroke-width="2.200" /></svg>
            </div>
            <div class="day-box">
                <div class="day-num">27</div>
                <div class="day-text">
                    <div class="day-name">Fri</div>
                    <div class="day-month">May 2016 <span class="cw">CW 21</span></div>
                </div>
                <div class="day-nav bar-grid">
                    <svg width="5" height="8"><path d="M5 0v8L0 4z" /></svg>
                    <svg width="10" height="10"><circle cx="5" cy="5" r="4" fill="none" stroke="#000" stroke-width="2" /></svg>
                    <svg width="5" height="8"><path d="M0 0v8l5-4z" /></svg>
                    <svg class="day-more" width="9" height="5"><path d="M0 0h9L4.500 5z" /></svg>
                </div>
            </div>
            <div class="event-tools d-flex align-items-center">
                <svg width="16" height="17" viewBox="0 0 16 17">
                    <rect x=".5" y="2.500" width="15" height="13.500" rx="1" fill="#f8f8f8" stroke="#3465a4" />
                    <path d="M1 3h14v3H1z" fill="#6a9bd8" />
                    <path d="M4 .5v4M12 .5v4" stroke="#8b8b84" stroke-width="1.800" />
                    <path d="M3 9.500h9M3 12h7M5.500 8v6M8 8v6" stroke="#b5b5b0" />
                    <path d="M12.500 9v7M9 12.500h7" stroke="#2a5fb0" stroke-width="2.600" />
                    <path d="M12.500 10v5M10 12.500h5" stroke="#9cc0ee" />
                </svg>
            </div>
            <div class="agenda" id="agenda"></div>
            <div class="show-done d-flex align-items-center">
                <div class="done-box"></div>
                <span>Show completed Tasks</span>
            </div>
            <div class="task-head">
                <div class="head-cell">
                    <svg width="13" height="13" viewBox="0 0 13 13"><rect x=".5" y=".5" width="12" height="12" fill="#fafafa" stroke="#b4b4b4" /><path d="M3 6l2.500 3L10 3.500" fill="none" stroke="#444" stroke-width="1.500" /></svg>
                </div>
                <div class="head-cell"><svg width="5" height="12"><path d="M1 0h3v5H3v2H2V5H1zM1 9h3v1H3v1H2v-1H1z" /></svg></div>
                <div class="head-cell title-cell">Title</div>
                <div class="head-cell"><svg width="13" height="13"><use href="#i-pick" /></svg></div>
            </div>
            <div class="task-list" id="task-list"></div>
            <div class="task-entry"><div class="sunken"></div></div>
        </div>
    </div>

    <div class="statusbar bar-grid">
        <svg width="16" height="16" viewBox="0 0 16 16">
            <path d="M6.500.5h9v7h-9zM7 9.500h8.500v2H7z" fill="#e6e6e3" stroke="#777" />
            <path d="M8 2h6v4H8z" fill="#3465a4" />
            <path d="M.5 4.500h9v7h-9zM.5 13.500h9v2h-9z" fill="#e6e6e3" stroke="#777" />
            <path d="M2 6h6v4H2z" fill="#3465a4" />
        </svg>
        <span>Unread: 636</span>
        <span>Total: 2947</span>
        <svg width="16" height="16" viewBox="0 0 16 16">
            <rect x=".5" y="1.500" width="15" height="14" fill="#fff" stroke="#204a87" />
            <path d="M1 2h14v2H1z" fill="#6a9bd8" />
            <path d="M3.500 0v4M12.500 0v4" stroke="#8b8b84" stroke-width="1.600" />
            <text x="8" y="13" font-size="9" font-weight="bold" text-anchor="middle" fill="#1414b0">27</text>
        </svg>
        <span>Today Pane</span>
        <svg width="12" height="8"><path d="M1 1.500l4.500 4.500L10 1.500" fill="none" stroke="#000" stroke-width="2" /></svg>
    </div>
    <div class="bottom-edge d-flex justify-content-between">
        <div></div>
        <div></div>
    </div>

    <script src="https://cdn.jsdelivr.net/npm/bootstrap@5.3.0/dist/js/bootstrap.bundle.min.js"></script>
    <script>
        // level, icon, twisty, label
        const folders = [
            [0, 'account', 'open'], [1, 'inbox'], [1, 'draft'], [1, 'sent'], [1, 'archive', 'shut'], [1, 'trash', '', 'T'],
            [1, 'folder', 'shut'], [1, 'folder', 'shut'], [1, 'folder'], [1, 'folder'], [1, 'folder', 'open'],
            [2, 'folder'], [2, 'folder'],
            [1, 'folder', 'shut'], [1, 'folder', 'shut'], [1, 'folder', 'shut'], [1, 'folder', 'shut'],
            [1, 'folder', 'shut'], [1, 'folder', 'shut'], [1, 'folder', 'shut'], [1, 'folder', 'shut'],
            [0, 'account', 'open'], [1, 'inbox'], [1, 'draft'], [1, 'sent'], [1, 'spark'], [1, 'folder'], [1, 'folder', 'shut'],
            [0, 'account', 'shut', 'E \u00a0H'],
            [0, 'account', 'open'], [1, 'inbox'], [1, 'draft'], [1, 'sent'], [1, 'archive', 'shut'], [1, 'trash', 'shut', 'T'],
            [0, 'mail', 'shut'],
            [0, 'account', 'open', 'E \u00a0H'], [1, 'inbox'], [1, 'sent'], [1, 'trash', '', 'T'],
            [0, 'pc', 'shut']
        ];

        document.getElementById('folder-tree').innerHTML = folders.map(([level, icon, twisty, label], i) => `
            <div class="tree-row ${i === 1 ? 'chosen' : ''}" style="padding-left: ${2 + level * 18}px">
                <svg width="10" height="10">${twisty ? `<use href="#i-${twisty}" />` : ''}</svg>
                <svg width="16" height="16" style="margin-left: 5px"><use href="#i-${icon}" /></svg>
                <span class="lbl ${level ? '' : 'fw-bold'}">${label || ''}</span>
            </div>`).join('');

        // per row: replied, attachment, subject / sender text with its indent
        const mails = Array.from({ length: 19 }, () => ({}));
        [0, 1, 4, 6, 8, 10].forEach(i => mails[i].replied = true);
        [6, 10].forEach(i => mails[i].clip = true);
        mails[1].subject = ['T', 36];
        mails[4].subject = ['T', 78];
        mails[2].from = ['T', 41];
        mails[8].from = ['T', 41];
        mails[11].from = ['T', 26];
        mails[16].unread = true;
        mails[18].subject = ['Automatischer Spam Report', 0];
        mails[18].date = '05/18/2016 02:11 AM';
        mails[18].from = ['GMX Kundenmanagem…', 7];

        const indented = t => t ? `<span style="margin-left: ${t[1]}px">${t[0]}</span>` : '';
        document.getElementById('mail-list').innerHTML = mails.map((m, i) => `
            <div class="mail-row list-grid ${i === 0 ? 'chosen' : ''}">
                <div></div>
                <div class="flag-slot"><svg width="14" height="14" fill="${i ? '#fafafa' : '#7d93a6'}" stroke="${i ? '#d2d2d2' : 'none'}"><use href="#i-star" /></svg></div>
                <div class="dot ${m.unread ? 'unread' : ''}"></div>
                <div class="clip-slot">${m.clip ? '<svg width="13" height="13" stroke="#777974"><use href="#i-clip" /></svg>' : ''}</div>
                <div class="wide">
                    <div class="reply-slot">${m.replied ? '<svg width="13" height="14"><use href="#i-reply" /></svg>' : ''}</div>
                    ${indented(m.subject)}
                </div>
                <div class="wide"><span class="date">${m.date || ''}</span></div>
                <div class="wide">${indented(m.from)}</div>
                <div class="dot"></div>
            </div>`).join('');

        document.getElementById('agenda').innerHTML = [['Today', false], ['Tomorrow', true], ['Upcoming (5 days)', true]].map(([name, closed]) => `
            <div class="agenda-row">
                <svg width="9" height="9"><rect x=".5" y=".5" width="8" height="8" fill="#fff" stroke="#7d7dc8" /><path d="M2 4.500h5${closed ? 'M4.500 2v5' : ''}" stroke="#000" /></svg>
                <span>${name}</span>
            </div>`).join('');

        document.getElementById('task-list').innerHTML = '<div class="task-row"><div class="task-check"></div></div>'.repeat(8);
    </script>
</body>

</html>
